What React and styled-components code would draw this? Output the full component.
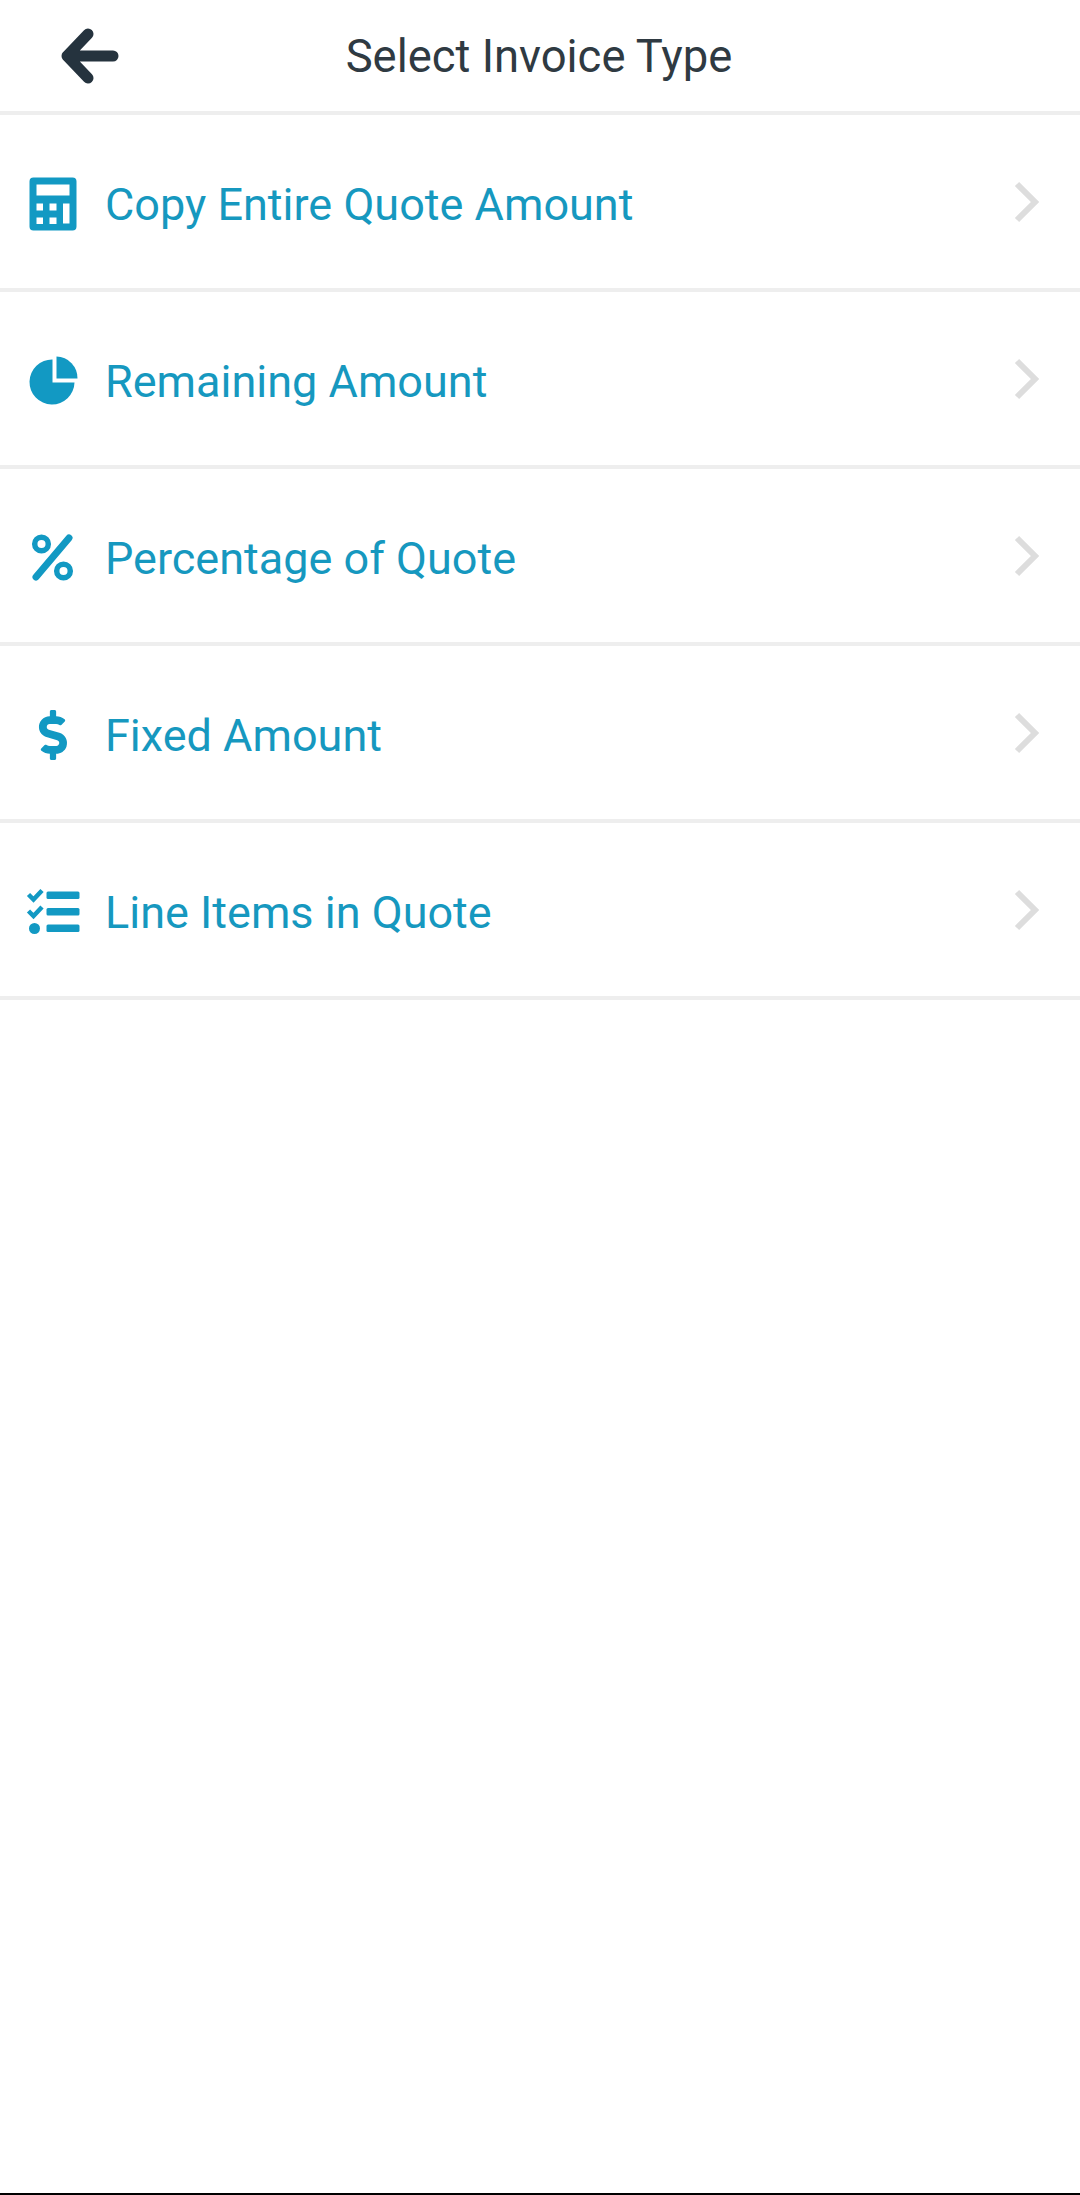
import styled, { createGlobalStyle } from "styled-components";
import { FaDollarSign } from "react-icons/fa";

const GlobalStyle = createGlobalStyle`
  html, body {
    margin: 0;
    padding: 0;
    background: #fff;
  }
`;

const Screen = styled.div`
  display: flex;
  flex-direction: column;
  min-height: 100vh;
  box-sizing: border-box;
  font-family: Roboto, "Liberation Sans", sans-serif;
`;

const Header = styled.header`
  display: grid;
  grid-template-columns: 140px 1fr 140px;
  align-items: center;
  height: 111px;
  border-bottom: 4px solid #eeeeee;
`;

const BackButton = styled.button`
  display: flex;
  align-items: center;
  justify-content: center;
  width: 100%;
  height: 111px;
  padding: 0 0 0 42px;
  border: 0;
  background: none;
`;

const Title = styled.h1`
  margin: 0;
  padding: 2px 2px 0 0;
  font-size: 45.4px;
  font-weight: 400;
  text-align: center;
  color: #2f3a42;
`;

const List = styled.main`
  flex: 1;
`;

const Row = styled.div`
  display: flex;
  align-items: center;
  height: 169px;
  padding-top: 4px;
  border-bottom: 4px solid #eeeeee;
`;

const IconCell = styled.div`
  display: flex;
  align-items: center;
  justify-content: center;
  flex: none;
  width: 105px;
  color: #1299c3;
`;

const Label = styled.span`
  flex: 1;
  padding-top: 2px;
  font-size: 45px;
  color: #1698bf;
`;

const Chevron = styled.svg`
  flex: none;
  width: 30px;
  height: 46px;
  margin-right: 39px;
`;

const BottomEdge = styled.div`
  height: 2px;
  background: #000;
`;

const Glyph = styled.svg`
  display: block;
  width: 60px;
  height: 60px;
`;

const Calculator = () => (
  <Glyph viewBox="22.5 173.5 60 60">
    <path
      fill="currentColor"
      fillRule="evenodd"
      d="M33 177h39a4 4 0 0 1 4 4v45a4 4 0 0 1-4 4H33a4 4 0 0 1-4-4v-45a4 4 0 0 1 4-4zM36 184v11h33v-11zM36 203v7h6.500v-7zM49 203v7h7v-7zM62.500 203v20h6.500v-20zM36 217v6.500h6.500V217zM49 217v6.500h7V217z"
    />
  </Glyph>
);

const PieChart = () => (
  <Glyph viewBox="22.5 350.5 60 60">
    <path fill="currentColor" d="M52 359v23h22a22.500 22.500 0 1 1-22-23z" />
    <path fill="currentColor" d="M56 356a21.500 21.500 0 0 1 21 22H56z" />
  </Glyph>
);

const Percent = () => (
  <Glyph viewBox="22.500 527.500 60 60">
    <g fill="none" stroke="currentColor">
      <circle cx="41" cy="543.500" r="6.800" strokeWidth="5.500" />
      <circle cx="63" cy="570.500" r="6.800" strokeWidth="5.500" />
      <path d="M68.500 537.500 35.500 576.500" strokeWidth="7" strokeLinecap="round" />
    </g>
  </Glyph>
);

const Tasks = () => (
  <Glyph viewBox="22.500 881.500 60 60">
    <g fill="currentColor">
      <rect x="46" y="891" width="33" height="7.500" rx="1.500" />
      <rect x="46" y="907.500" width="33" height="7.500" rx="1.500" />
      <rect x="46" y="924" width="33" height="7.500" rx="1.500" />
      <circle cx="34" cy="928" r="5.500" />
    </g>
    <path
      d="M28 894l5 5 8.500-9M28 910.500l5 5 8.500-9"
      fill="none"
      stroke="currentColor"
      strokeWidth="4.500"
    />
  </Glyph>
);

const ArrowBack = () => (
  <svg width="60" height="60" viewBox="0 0 60 60">
    <path
      d="M27 6 6 28l21 22M6 28h46"
      transform="translate(0 2)"
      fill="none"
      stroke="#25333e"
      strokeWidth="11"
      strokeLinecap="round"
      strokeLinejoin="round"
    />
  </svg>
);

const items = [
  { label: "Copy Entire Quote Amount", icon: <Calculator /> },
  { label: "Remaining Amount", icon: <PieChart /> },
  { label: "Percentage of Quote", icon: <Percent /> },
  { label: "Fixed Amount", icon: <FaDollarSign size={50} /> },
  { label: "Line Items in Quote", icon: <Tasks /> },
];

const App = () => {
  return (
    <Screen>
      <GlobalStyle />
      <Header>
        <BackButton aria-label="Back">
          <ArrowBack />
        </BackButton>
        <Title>Select Invoice Type</Title>
      </Header>
      <List>
        {items.map((item) => (
          <Row key={item.label}>
            <IconCell>{item.icon}</IconCell>
            <Label>{item.label}</Label>
            <Chevron viewBox="0 0 30 46">
              <path d="M6 3l18 18L6 39" fill="none" stroke="#dddddd" strokeWidth="6" />
            </Chevron>
          </Row>
        ))}
      </List>
      <BottomEdge />
    </Screen>
  );
};

export default App;
